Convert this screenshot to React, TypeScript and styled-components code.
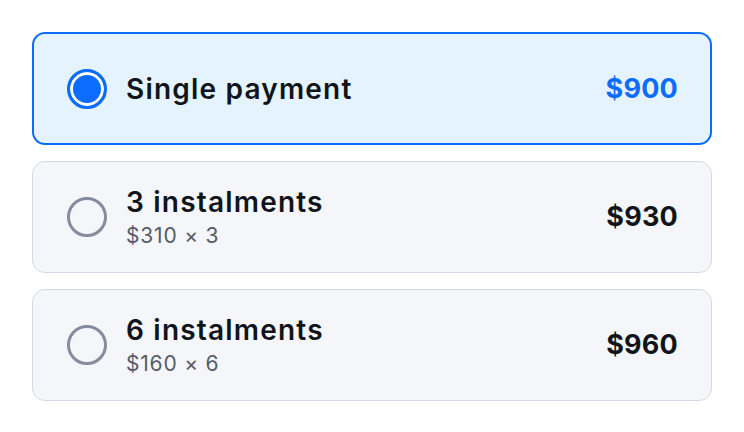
import styled, { createGlobalStyle } from 'styled-components';

const GlobalStyle = createGlobalStyle`
    html, body {
        margin: 0;
        padding: 0;
        background: #ffffff;
    }
    body {
        font-family: Inter, "Open Sans", sans-serif;
        -webkit-font-smoothing: antialiased;
    }
`;

type Plan = {
    id: string;
    title: string;
    detail?: string;
    price: string;
};

const plans: Plan[] = [
    { id: 'single', title: 'Single payment', price: '$900' },
    { id: 'three', title: '3 instalments', detail: '$310 × 3', price: '$930' },
    { id: 'six', title: '6 instalments', detail: '$160 × 6', price: '$960' },
];

export default function App() {
    const selected = 'single';

    return (
        <>
            <GlobalStyle />
            <Page>
                <OptionList>
                    {plans.map((plan) => {
                        const active = plan.id === selected;
                        return (
                            <Option key={plan.id} $active={active}>
                                <Radio $active={active} />
                                <Labels>
                                    <Title>{plan.title}</Title>
                                    {plan.detail && <Detail>{plan.detail}</Detail>}
                                </Labels>
                                <Price $active={active}>{plan.price}</Price>
                            </Option>
                        );
                    })}
                </OptionList>
            </Page>
        </>
    );
}

const Page = styled.main`
    padding: 32px;
    width: 744px;
    box-sizing: border-box;
`;

const OptionList = styled.div`
    display: flex;
    flex-direction: column;
    gap: 16px;
`;

const Option = styled.div<{ $active: boolean }>`
    box-sizing: border-box;
    height: ${({ $active }) => ($active ? '113px' : '112px')};
    display: flex;
    align-items: center;
    gap: 19px;
    padding: 0 ${({ $active }) => ($active ? '32px' : '33px')} 0 ${({ $active }) => ($active ? '33px' : '34px')};
    border-radius: 13px;
    border: ${({ $active }) => ($active ? '2px solid #0b6cff' : '1.5px solid #d3d9e4')};
    background: ${({ $active }) => ($active ? '#e5f3ff' : '#f5f6f9')};
    cursor: pointer;
`;

const Radio = styled.span<{ $active: boolean }>`
    box-sizing: border-box;
    flex-shrink: 0;
    width: 40px;
    height: 40px;
    border-radius: 50%;
    border: 3px solid ${({ $active }) => ($active ? '#0b6cff' : '#868b9e')};
    background: ${({ $active }) => ($active ? '#0b6cff' : 'transparent')};
    box-shadow: ${({ $active }) => ($active ? 'inset 0 0 0 3px #ffffff' : 'none')};
`;

const Labels = styled.div`
    flex: 1;
    display: flex;
    flex-direction: column;
    gap: 5px;
`;

const Title = styled.span`
    font-size: 28px;
    line-height: 32px;
    font-weight: 600;
    color: #11151a;
    letter-spacing: 1.2px;
`;

const Detail = styled.span`
    font-size: 21px;
    line-height: 26px;
    font-weight: 400;
    color: #565b67;
    letter-spacing: 0.8px;
`;

const Price = styled.span<{ $active: boolean }>`
    font-size: 27px;
    line-height: 32px;
    font-weight: 700;
    color: ${({ $active }) => ($active ? '#0b6cff' : '#11151a')};
    letter-spacing: 0.2px;
`;
